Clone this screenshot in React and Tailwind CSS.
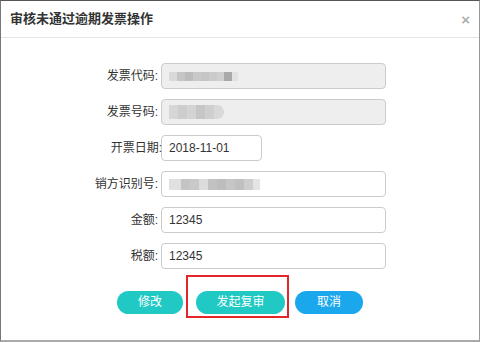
const fontStack = { fontFamily: '"Liberation Sans", "Noto Sans CJK SC", sans-serif' };

// pixelated blur blocks standing in for masked values
function Mosaic({ cells, height, rounded }) {
  return (
    <div className={`flex overflow-hidden blur-[0.6px] ${rounded ? 'rounded-r-full' : ''}`} style={{ height }}>
      {cells.map(([width, color], index) => (
        <div key={index} style={{ width, background: color }} />
      ))}
    </div>
  );
}

function Field({ label, width = 225, disabled, value, mosaic, labelShift }) {
  return (
    <div className="flex items-center">
      <div className="w-[157px] shrink-0 text-right text-[12px] text-[#333]">
        <span className={labelShift ? 'relative left-[4px]' : ''}>{label}</span>
      </div>
      <div
        className={`ml-[3px] flex h-[26px] items-center rounded-[4px] border border-[#ccc] pl-[7px] text-[12px] text-[#333] ${disabled ? 'bg-[#eee]' : 'bg-white'}`}
        style={{ width }}
      >
        {mosaic ?? value}
      </div>
    </div>
  );
}

export default function App() {
  return (
    <div className="h-[343px] w-[480px] bg-white" style={fontStack}>
      <div className="flex h-[342px] w-[480px] flex-col border border-t-[#555] border-l-[#777] border-r-[#999] border-b-2 border-b-[#aaa] bg-white">
        <div className="flex h-[37px] shrink-0 items-center justify-between border-b border-[#e5e5e5] pl-[9px] pr-[9px]">
          <h3 className="text-[13px] font-bold text-[#333]">审核未通过逾期发票操作</h3>
          <span className="text-[15px] font-bold leading-none text-[#b0b0b0]">×</span>
        </div>

        <div className="flex flex-col gap-[10px] pt-[25px]">
          <Field
            label="发票代码:"
            disabled
            mosaic={
              <Mosaic
                height={9}
                cells={[
                  [8, '#d9d9d9'],
                  [8, '#c6c6c6'],
                  [8, '#bcbcbc'],
                  [8, '#c9c9c9'],
                  [8, '#c5c5c5'],
                  [8, '#cbcbcb'],
                  [7, '#d0d0d0'],
                  [8, '#a9a9a9'],
                  [6, '#e2e2e2']
                ]}
              />
            }
          />
          <Field
            label="发票号码:"
            disabled
            mosaic={
              <Mosaic
                height={14}
                rounded
                cells={[
                  [9, '#d6d6d6'],
                  [9, '#cdcdcd'],
                  [9, '#d4d4d4'],
                  [9, '#c6c6c6'],
                  [9, '#cfcfcf'],
                  [10, '#d9d9d9']
                ]}
              />
            }
          />
          <Field label="开票日期:" width={101} value="2018-11-01" labelShift />
          <Field
            label="销方识别号:"
            mosaic={
              <Mosaic
                height={11}
                cells={[
                  [12, '#e0e0e0'],
                  [9, '#c4c4c4'],
                  [9, '#c9c9c9'],
                  [9, '#dcdcdc'],
                  [9, '#c2c2c2'],
                  [9, '#bdbdbd'],
                  [9, '#c6c6c6'],
                  [9, '#c0c0c0'],
                  [9, '#cecece'],
                  [7, '#e4e4e4']
                ]}
              />
            }
          />
          <Field label="金额:" value="12345" />
          <Field label="税额:" value="12345" />
        </div>

        <div className="mt-[6px] flex items-end justify-center">
          <button className="mb-[4px] h-[23px] w-[66px] rounded-full bg-[#20c9c4] text-[12px] text-white">修改</button>
          <div className="ml-[3px] border-2 border-[#e3262b] pb-[2px] pl-[8px] pr-[2px] pt-[12px]">
            <button className="h-[23px] w-[89px] rounded-full bg-[#20c9c4] text-[12px] text-white">发起复审</button>
          </div>
          <button className="mb-[4px] ml-[6px] h-[23px] w-[68px] rounded-full bg-[#1aa7ec] text-[12px] text-white">取消</button>
        </div>
      </div>
    </div>
  );
}
